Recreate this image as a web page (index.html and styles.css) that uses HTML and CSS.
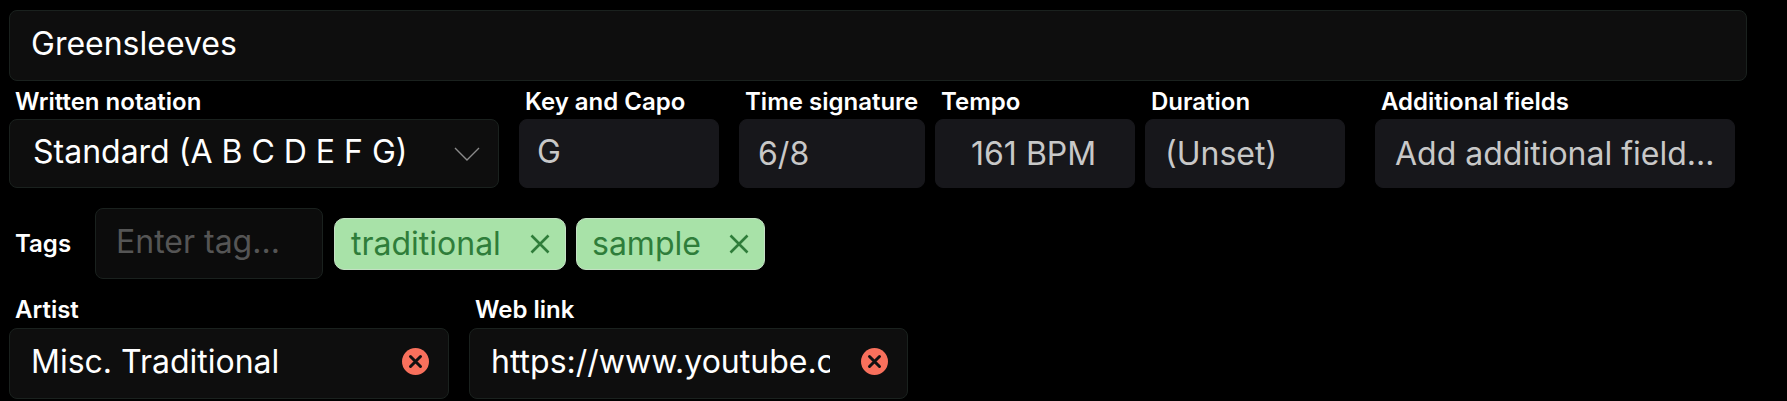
FILE: index.html
```html
<!DOCTYPE html>
<html lang="en">
<head>
<meta charset="utf-8">
<title>Greensleeves</title>
<link rel="stylesheet" href="styles.css">
</head>
<body>
<div class="box title"><span>Greensleeves</span></div>
<div class="meta-row">
  <div class="field f-notation"><label>Written notation</label>
    <div class="box select"><span>Standard (A B C D E F G)</span>
      <svg class="chev" width="26" height="14" viewBox="0 0 26 14"><path d="M1 1l12 12L25 1" fill="none" stroke="#8a8a8a" stroke-width="1.4"/></svg>
    </div>
  </div>
  <div class="field f-key"><label>Key and Capo</label><div class="box ghost key"><span>G</span></div></div>
  <div class="field f-time"><label>Time signature</label><div class="box ghost"><span>6/8</span></div></div>
  <div class="field f-tempo"><label>Tempo</label><div class="box ghost center"><span>161 BPM</span></div></div>
  <div class="field f-dur"><label>Duration</label><div class="box ghost"><span>(Unset)</span></div></div>
  <div class="field f-add"><label>Additional fields</label><div class="box ghost"><span>Add additional field...</span></div></div>
</div>
<div class="tags-row">
  <label>Tags</label>
  <div class="box tag-input"><span>Enter tag...</span></div>
  <div class="chip chip-a"><span>traditional</span>
    <svg width="20" height="20" viewBox="0 0 20 20"><path d="M1.5 1.5l17 17M18.5 1.5l-17 17" stroke="#2f7d3a" stroke-width="2.6" fill="none"/></svg></div>
  <div class="chip chip-b"><span>sample</span>
    <svg width="20" height="20" viewBox="0 0 20 20"><path d="M1.5 1.5l17 17M18.5 1.5l-17 17" stroke="#2f7d3a" stroke-width="2.6" fill="none"/></svg></div>
</div>
<div class="link-row">
  <div class="field f-artist"><label>Artist</label>
    <div class="box clearable"><span class="clip">Misc. Traditional</span>
      <svg class="clear" width="27" height="27" viewBox="0 0 27 27"><circle cx="13.5" cy="13.5" r="13.5" fill="#f8705c"/><path d="M8.5 8.5l10 10M18.500 8.500l-10 10" stroke="#111" stroke-width="3" stroke-linecap="round"/></svg>
    </div>
  </div>
  <div class="field f-web"><label>Web link</label>
    <div class="box clearable"><span class="clip">https://www.youtube.com/watch</span>
      <svg class="clear" width="27" height="27" viewBox="0 0 27 27"><circle cx="13.5" cy="13.5" r="13.5" fill="#f8705c"/><path d="M8.5 8.5l10 10M18.500 8.500l-10 10" stroke="#111" stroke-width="3" stroke-linecap="round"/></svg>
    </div>
  </div>
</div>
</body>
</html>
```
FILE: styles.css
```css
* { box-sizing: border-box; }
html, body { height: 100%; }
body {
  margin: 0;
  padding: 10px 0 0 9px;
  background: #000;
  color: #fff;
  font-family: Inter, "Liberation Sans", sans-serif;
  font-size: 32px;
  overflow: hidden;
}
label {
  display: block;
  font-size: 24px;
  font-weight: 600;
  line-height: 24px;
  color: #fff;
  white-space: nowrap;
}
.box {
  display: flex;
  align-items: center;
  background: #0e0e0e;
  border: 1px solid #1a211e;
  border-radius: 8px;
  padding: 0 21px 5px;
  white-space: nowrap;
}
.title { width: 1738px; height: 71px; }
.meta-row { display: flex; margin-top: 9px; }
.field .box { height: 69px; margin-top: 5px; }
.field label { padding-left: 6px; }
.select { justify-content: space-between; padding: 0 18px 4px 23px; }
.chev { margin-top: 4px; flex: none; }
.ghost { background: #17171b; border-color: #17171b; color: #c8c8c8; padding: 0 18px 0; }
.key { padding-bottom: 4px; padding-left: 17px; }
.center { padding-left: 35px; }
.f-notation { width: 490px; margin-right: 20px; }
.f-key { width: 200px; margin-right: 20px; }
.f-time { width: 186px; margin-right: 10px; }
.f-tempo { width: 200px; margin-right: 10px; }
.f-dur { width: 200px; margin-right: 30px; }
.f-add { width: 360px; }
.f-dur .box { padding-left: 19px; }
.f-add .box { padding-left: 19px; }
.tags-row { display: flex; align-items: center; margin-top: 20px; height: 71px; padding-left: 6px; }
.tags-row label { width: 80px; }
.tag-input { width: 228px; height: 71px; color: #555; background: #0c0c0c; padding-left: 20px; }
.chip {
  display: flex;
  align-items: center;
  justify-content: space-between;
  height: 52px;
  margin-left: 11px;
  padding: 0 15px 0 16px;
  background: #a8e2a8;
  border: 1px solid #c4e0c4;
  border-radius: 10px;
  color: #2f7d3a;
}
.chip-a { width: 232px; }
.chip-b { width: 189px; margin-left: 10px; padding-left: 15px; }
.link-row { display: flex; margin-top: 19px; }
.f-artist { width: 440px; margin-right: 20px; }
.f-web { width: 439px; }
.link-row .box { height: 71px; margin-top: 6px; padding: 0 19px 4px 21px; justify-content: space-between; }
.clip { display: block; overflow: hidden; width: 339px; }
.clear { flex: none; }
```
